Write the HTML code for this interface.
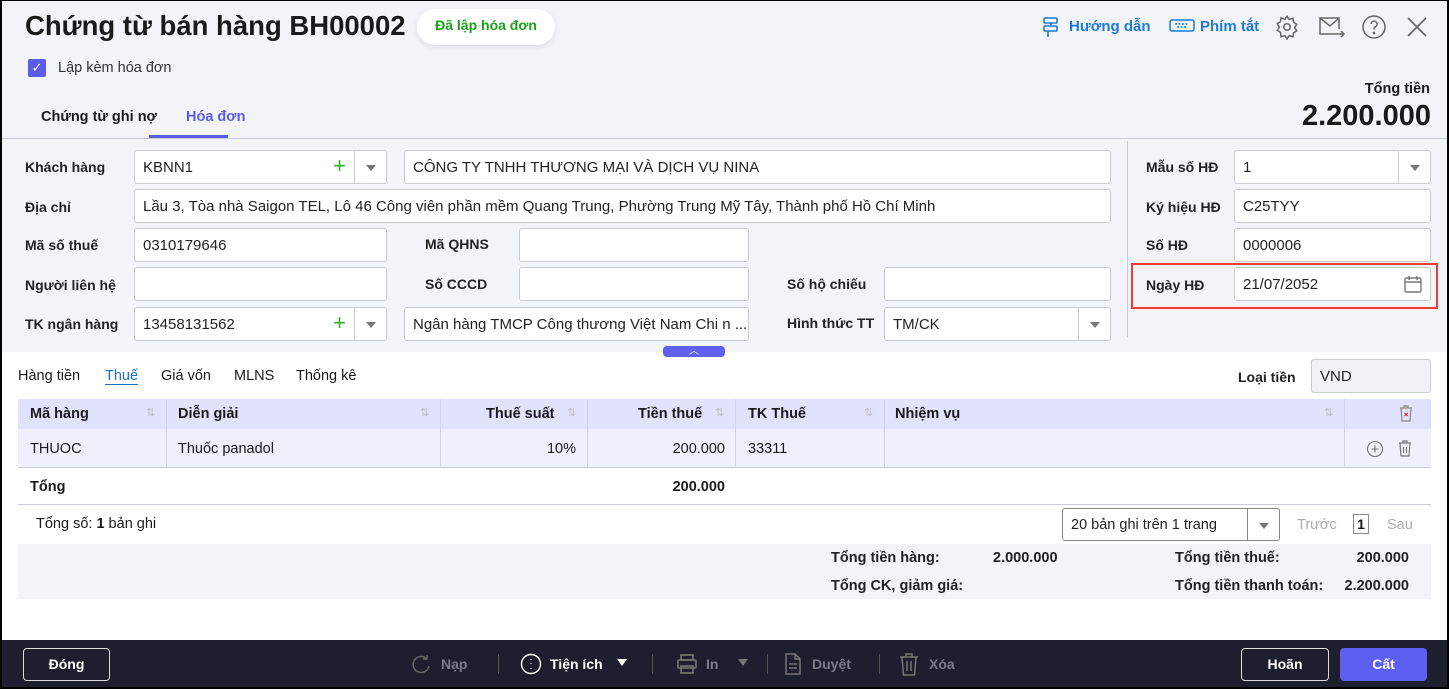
<!DOCTYPE html>
<html><head><meta charset="utf-8"><style>
*{box-sizing:border-box;margin:0;padding:0}
body{width:1449px;height:689px;overflow:hidden;font-family:"Liberation Sans",Arial,sans-serif;font-size:14px;color:#1a1a1a;background:#000;position:relative}
.page{position:absolute;left:2px;top:1px;width:1445px;height:686px;background:#fff;overflow:hidden}
.a{position:absolute}
.gray{background:#f3f4f8}
.lbl{position:absolute;font-weight:bold;font-size:14px;color:#222}
.in{position:absolute;height:34px;background:#fff;border:1px solid #c9cbd1;border-radius:3px;padding:0 8px;line-height:34px;font-size:15px;color:#222;white-space:nowrap;overflow:hidden}
.dd{position:absolute;right:0;top:0;width:32px;height:32px;border-left:1px solid #c9cbd1}
.dd:after{content:"";position:absolute;left:11px;top:14px;border-left:5px solid transparent;border-right:5px solid transparent;border-top:6px solid #777}
.plus{position:absolute;top:0;color:#2db12d;font-size:22px;line-height:30px}
.hd{position:absolute;top:398px;height:30px;background:#e1e2fb;font-weight:bold;line-height:30px;font-size:14.5px}
.fbtn{position:absolute;color:#7a7d88;font-size:14px;font-weight:bold;top:655px}
.s{font-size:14.5px}
</style></head><body><div class="page">
<div class="a gray" style="left:0;top:0;width:1445px;height:351px"></div>
<div class="a" style="left:23px;top:9px;font-size:27.5px;font-weight:bold;color:#1a1a1a">Chứng từ bán hàng BH00002</div>
<div class="a" style="left:415px;top:8px;width:138px;height:36px;background:#fff;border-radius:18px;box-shadow:0 2px 6px rgba(0,0,0,.1);color:#1aa31a;font-weight:bold;font-size:14px;text-align:center;line-height:32px">Đã lập hóa đơn</div>
<div class="a" style="left:26px;top:58px;width:18px;height:18px;background:#5c5ce6;border-radius:2px;color:#fff;font-size:13px;text-align:center;line-height:18px">✓</div>
<div class="a" style="left:56px;top:59px;font-size:14.5px;color:#333">Lập kèm hóa đơn</div>
<div class="a" style="left:39px;top:108px;font-weight:bold;font-size:14.5px">Chứng từ ghi nợ</div>
<div class="a" style="left:184px;top:108px;font-weight:bold;font-size:14.5px;color:#5c5ce6">Hóa đơn</div>
<div class="a" style="left:147px;top:134px;width:79px;height:3px;background:#5c5ce6"></div>
<div class="a" style="left:0;top:137px;width:1445px;height:1px;background:#c9cbd8"></div>
<svg class="a" style="left:1038px;top:15px" width="22" height="22" viewBox="0 0 22 22" fill="none" stroke="#1e7bd8" stroke-width="1.6"><rect x="4" y="2" width="13" height="5" rx="1"/><rect x="4" y="10" width="13" height="5" rx="1"/><path d="M11 7v3M8 15v6"/></svg>
<div class="a" style="left:1067px;top:17px;color:#1e7bd8;font-weight:bold;font-size:15px">Hướng dẫn</div>
<svg class="a" style="left:1167px;top:18px" width="26" height="14" viewBox="0 0 26 14" fill="none" stroke="#1e7bd8" stroke-width="1.5"><rect x="1" y="1" width="24" height="11" rx="2"/><path d="M6 5h14M8 8h10" stroke-dasharray="2 1.5"/></svg>
<div class="a" style="left:1198px;top:17px;color:#1e7bd8;font-weight:bold;font-size:15px">Phím tắt</div>
<svg class="a" style="left:1272px;top:13px" width="26" height="26" viewBox="0 0 24 24" fill="none" stroke="#666" stroke-width="1.4"><circle cx="12" cy="12" r="3"/><path d="M12 2l2 3 3.5-1 .5 3.5 3 2-2 3 2 3-3 2-.5 3.5-3.5-1-2 3-2-3-3.5 1L6 17l-3-2 2-3-2-3 3-2 .5-3.5L10 5z"/></svg>
<svg class="a" style="left:1316px;top:14px" width="28" height="24" viewBox="0 0 28 24" fill="none" stroke="#666" stroke-width="1.5"><path d="M21 14V3H2v16h15M2 3l10 8 9-8M17 19h9M23 16l3 3-3 3"/></svg>
<svg class="a" style="left:1360px;top:14px" width="24" height="24" viewBox="0 0 24 24" fill="none" stroke="#666" stroke-width="1.5"><circle cx="12" cy="12" r="11"/><path d="M9 9a3 3 0 1 1 4 3c-1 .5-1 1-1 2.5"/><circle cx="12" cy="18" r=".6" fill="#666"/></svg>
<svg class="a" style="left:1405px;top:16px" width="20" height="20" viewBox="0 0 20 20" stroke="#666" stroke-width="1.6"><path d="M1 1l18 18M19 1L1 19"/></svg>
<div class="a" style="right:17px;top:80px;font-weight:bold;font-size:14.5px">Tổng tiền</div>
<div class="a" style="right:16px;top:99px;font-weight:bold;font-size:29px">2.200.000</div>
<div class="lbl" style="left:23px;top:158px">Khách hàng</div>
<div class="in" style="left:132px;top:149px;width:253px">KBNN1<span class="plus" style="right:40px">+</span><span class="dd"></span></div>
<div class="in" style="left:402px;top:149px;width:707px">CÔNG TY TNHH THƯƠNG MẠI VÀ DỊCH VỤ NINA</div>
<div class="lbl" style="left:23px;top:198px">Địa chỉ</div>
<div class="in" style="left:132px;top:188px;width:977px">Lầu 3, Tòa nhà Saigon TEL, Lô 46 Công viên phần mềm Quang Trung, Phường Trung Mỹ Tây, Thành phố Hồ Chí Minh</div>
<div class="lbl" style="left:23px;top:236px">Mã số thuế</div>
<div class="in" style="left:132px;top:227px;width:253px">0310179646</div>
<div class="lbl" style="left:423px;top:235px">Mã QHNS</div>
<div class="in" style="left:517px;top:227px;width:230px"></div>
<div class="lbl" style="left:23px;top:276px">Người liên hệ</div>
<div class="in" style="left:132px;top:266px;width:253px"></div>
<div class="lbl" style="left:423px;top:275px">Số CCCD</div>
<div class="in" style="left:517px;top:266px;width:230px"></div>
<div class="lbl" style="left:785px;top:275px">Số hộ chiếu</div>
<div class="in" style="left:882px;top:266px;width:227px"></div>
<div class="lbl" style="left:23px;top:315px">TK ngân hàng</div>
<div class="in" style="left:132px;top:306px;width:253px">13458131562<span class="plus" style="right:40px">+</span><span class="dd"></span></div>
<div class="in" style="left:402px;top:306px;width:345px">Ngân hàng TMCP Công thương Việt Nam Chi n ...</div>
<div class="lbl" style="left:785px;top:314px">Hình thức TT</div>
<div class="in" style="left:882px;top:306px;width:227px">TM/CK<span class="dd"></span></div>
<div class="a" style="left:1125px;top:140px;width:1px;height:196px;background:#c9cbd1"></div>
<div class="lbl" style="left:1144px;top:158px">Mẫu số HĐ</div>
<div class="in" style="left:1232px;top:149px;width:197px">1<span class="dd"></span></div>
<div class="lbl" style="left:1144px;top:198px">Ký hiệu HĐ</div>
<div class="in" style="left:1232px;top:188px;width:197px">C25TYY</div>
<div class="lbl" style="left:1144px;top:236px">Số HĐ</div>
<div class="in" style="left:1232px;top:227px;width:197px">0000006</div>
<div class="a" style="left:1129px;top:262px;width:307px;height:46px;border:2px solid #ee3b3b"></div>
<div class="lbl" style="left:1144px;top:276px">Ngày HĐ</div>
<div class="in" style="left:1232px;top:266px;width:197px">21/07/2052</div>
<svg class="a" style="left:1401px;top:273px" width="20" height="20" viewBox="0 0 20 20" fill="none" stroke="#777" stroke-width="1.4"><rect x="2" y="4" width="16" height="14" rx="1.5"/><path d="M2 8h16M6 2v4M14 2v4"/></svg>
<div class="a" style="left:661px;top:345px;width:62px;height:11px;background:#6060ee;border-radius:4px;color:#fff;font-size:10px;text-align:center;line-height:12px">︿</div>
<div class="a s" style="left:16px;top:367px">Hàng tiền</div>
<div class="a s" style="left:103px;top:367px;color:#1e6fc8;border-bottom:1px solid #1e6fc8">Thuế</div>
<div class="a s" style="left:159px;top:367px">Giá vốn</div>
<div class="a s" style="left:232px;top:367px">MLNS</div>
<div class="a s" style="left:294px;top:367px">Thống kê</div>
<div class="lbl" style="left:1236px;top:368px">Loại tiền</div>
<div class="in" style="left:1309px;top:358px;width:120px;background:#f1f2f6">VND</div>
<div class="hd" style="left:16px;width:1413px"></div>
<div class="a" style="left:16px;top:428px;width:1413px;height:39px;background:#eff0fb;border-bottom:1px solid #c9cbd8"></div>
<div class="hd" style="left:28px;background:none">Mã hàng</div>
<div class="hd" style="left:176px;background:none">Diễn giải</div>
<div class="hd" style="left:484px;background:none">Thuế suất</div>
<div class="hd" style="left:636px;background:none">Tiền thuế</div>
<div class="hd" style="left:746px;background:none">TK Thuế</div>
<div class="hd" style="left:893px;background:none">Nhiệm vụ</div>
<div class="a" style="left:164px;top:398px;width:1px;height:69px;background:#cfd1e6"></div>
<div class="a" style="left:438px;top:398px;width:1px;height:69px;background:#cfd1e6"></div>
<div class="a" style="left:585px;top:398px;width:1px;height:69px;background:#cfd1e6"></div>
<div class="a" style="left:733px;top:398px;width:1px;height:69px;background:#cfd1e6"></div>
<div class="a" style="left:882px;top:398px;width:1px;height:69px;background:#cfd1e6"></div>
<div class="a" style="left:1342px;top:398px;width:1px;height:69px;background:#cfd1e6"></div>
<div class="a" style="left:144px;top:405px;color:#bbb;font-size:11px">⇅</div>
<div class="a" style="left:418px;top:405px;color:#bbb;font-size:11px">⇅</div>
<div class="a" style="left:565px;top:405px;color:#bbb;font-size:11px">⇅</div>
<div class="a" style="left:713px;top:405px;color:#bbb;font-size:11px">⇅</div>
<div class="a" style="left:862px;top:405px;color:#bbb;font-size:11px">⇅</div>
<div class="a" style="left:1322px;top:405px;color:#bbb;font-size:11px">⇅</div>
<svg class="a" style="left:1396px;top:403px" width="16" height="18" viewBox="0 0 16 18" fill="none" stroke="#888" stroke-width="1.2"><path d="M2 4h12M6 4V2h4v2M3 4l1 13h8l1-13"/><path d="M6.5 9l3 3M9.5 9l-3 3" stroke="#e33"/></svg>
<div class="a s" style="left:28px;top:440px">THUOC</div>
<div class="a s" style="left:176px;top:440px">Thuốc panadol</div>
<div class="a s" style="right:871px;top:440px">10%</div>
<div class="a s" style="right:722px;top:440px">200.000</div>
<div class="a s" style="left:746px;top:440px">33311</div>
<svg class="a" style="left:1364px;top:439px" width="18" height="18" viewBox="0 0 18 18" fill="none" stroke="#777" stroke-width="1.1"><circle cx="9" cy="9" r="7.5"/><path d="M9 5.5v7M5.5 9h7"/></svg>
<svg class="a" style="left:1395px;top:438px" width="16" height="18" viewBox="0 0 16 18" fill="none" stroke="#777" stroke-width="1.2"><path d="M2 4h12M6 4V2h4v2M3 4l1 13h8l1-13M6.5 8v6M9.5 8v6"/></svg>
<div class="a s" style="left:28px;top:478px;font-weight:bold">Tổng</div>
<div class="a s" style="right:722px;top:478px;font-weight:bold">200.000</div>
<div class="a" style="left:16px;top:503px;width:1413px;height:1px;background:#c9cbd8"></div>
<div class="a s" style="left:34px;top:515px">Tổng số: <b>1</b> bản ghi</div>
<div class="in" style="left:1060px;top:507px;width:218px;height:33px;border-color:#888;font-size:14.5px;line-height:32px">20 bản ghi trên 1 trang<span class="dd" style="border-color:#888;height:31px"></span></div>
<div class="a s" style="left:1295px;top:516px;color:#aaa">Trước</div>
<div class="a" style="left:1351px;top:513px;width:16px;height:20px;border:1px solid #888;font-weight:bold;text-align:center;line-height:18px">1</div>
<div class="a s" style="left:1385px;top:516px;color:#aaa">Sau</div>
<div class="a gray" style="left:16px;top:543px;width:1413px;height:55px"></div>
<div class="lbl s" style="left:829px;top:549px">Tổng tiền hàng:</div>
<div class="lbl s" style="left:991px;top:549px">2.000.000</div>
<div class="lbl s" style="left:1173px;top:549px">Tổng tiền thuế:</div>
<div class="lbl s" style="right:38px;top:549px">200.000</div>
<div class="lbl s" style="left:829px;top:577px">Tổng CK, giảm giá:</div>
<div class="lbl s" style="left:1173px;top:577px">Tổng tiền thanh toán:</div>
<div class="lbl s" style="right:38px;top:577px">2.200.000</div>
<div class="a" style="left:0;top:639px;width:1445px;height:47px;background:#1d1f2e"></div>
<div class="a" style="left:21px;top:647px;width:87px;height:33px;border:1px solid #ddd;border-radius:4px;color:#fff;font-weight:bold;text-align:center;line-height:31px">Đóng</div>
<svg class="a" style="left:409px;top:653px" width="20" height="22" viewBox="0 0 20 22" fill="none" stroke="#666" stroke-width="1.5"><path d="M16 5A8 8 0 1 0 18 12M16 1v4h-4"/></svg>
<div class="fbtn" style="left:439px">Nạp</div>
<div class="a" style="left:496px;top:653px;width:1px;height:20px;background:#555"></div>
<svg class="a" style="left:518px;top:652px" width="22" height="22" viewBox="0 0 22 22" fill="none" stroke="#fff" stroke-width="1.4"><circle cx="11" cy="11" r="9.5"/><path d="M11 6v.5M11 10.5v.5M11 15v.5" stroke-width="2"/></svg>
<div class="fbtn" style="left:548px;color:#fff">Tiện ích</div>
<div class="a" style="left:615px;top:658px;border-left:5px solid transparent;border-right:5px solid transparent;border-top:7px solid #fff"></div>
<div class="a" style="left:650px;top:653px;width:1px;height:20px;background:#555"></div>
<svg class="a" style="left:674px;top:652px" width="22" height="22" viewBox="0 0 22 22" fill="none" stroke="#777" stroke-width="1.6"><rect x="5" y="2" width="12" height="5"/><rect x="2" y="7" width="18" height="8" rx="1"/><rect x="5" y="13" width="12" height="7"/></svg>
<div class="fbtn" style="left:704px">In</div>
<div class="a" style="left:736px;top:658px;border-left:5px solid transparent;border-right:5px solid transparent;border-top:7px solid #777"></div>
<div class="a" style="left:765px;top:653px;width:1px;height:20px;background:#555"></div>
<svg class="a" style="left:782px;top:652px" width="18" height="22" viewBox="0 0 18 22" fill="none" stroke="#777" stroke-width="1.5"><path d="M2 1h9l5 5v15H2zM11 1v5h5M5 11h8M5 15h8"/></svg>
<div class="fbtn" style="left:810px">Duyệt</div>
<div class="a" style="left:877px;top:653px;width:1px;height:20px;background:#555"></div>
<svg class="a" style="left:897px;top:651px" width="20" height="24" viewBox="0 0 20 24" fill="none" stroke="#777" stroke-width="1.5"><path d="M1 5h18M7 5V2h6v3M3 5l1.5 18h11L17 5M8 9v10M12 9v10"/></svg>
<div class="fbtn" style="left:927px">Xóa</div>
<div class="a" style="left:1239px;top:647px;width:88px;height:33px;border:1px solid #ddd;border-radius:4px;color:#fff;font-weight:bold;text-align:center;line-height:31px">Hoãn</div>
<div class="a" style="left:1338px;top:647px;width:87px;height:33px;background:#5c5ff0;border-radius:4px;color:#fff;font-weight:bold;text-align:center;line-height:33px">Cất</div>
</div></body></html>
